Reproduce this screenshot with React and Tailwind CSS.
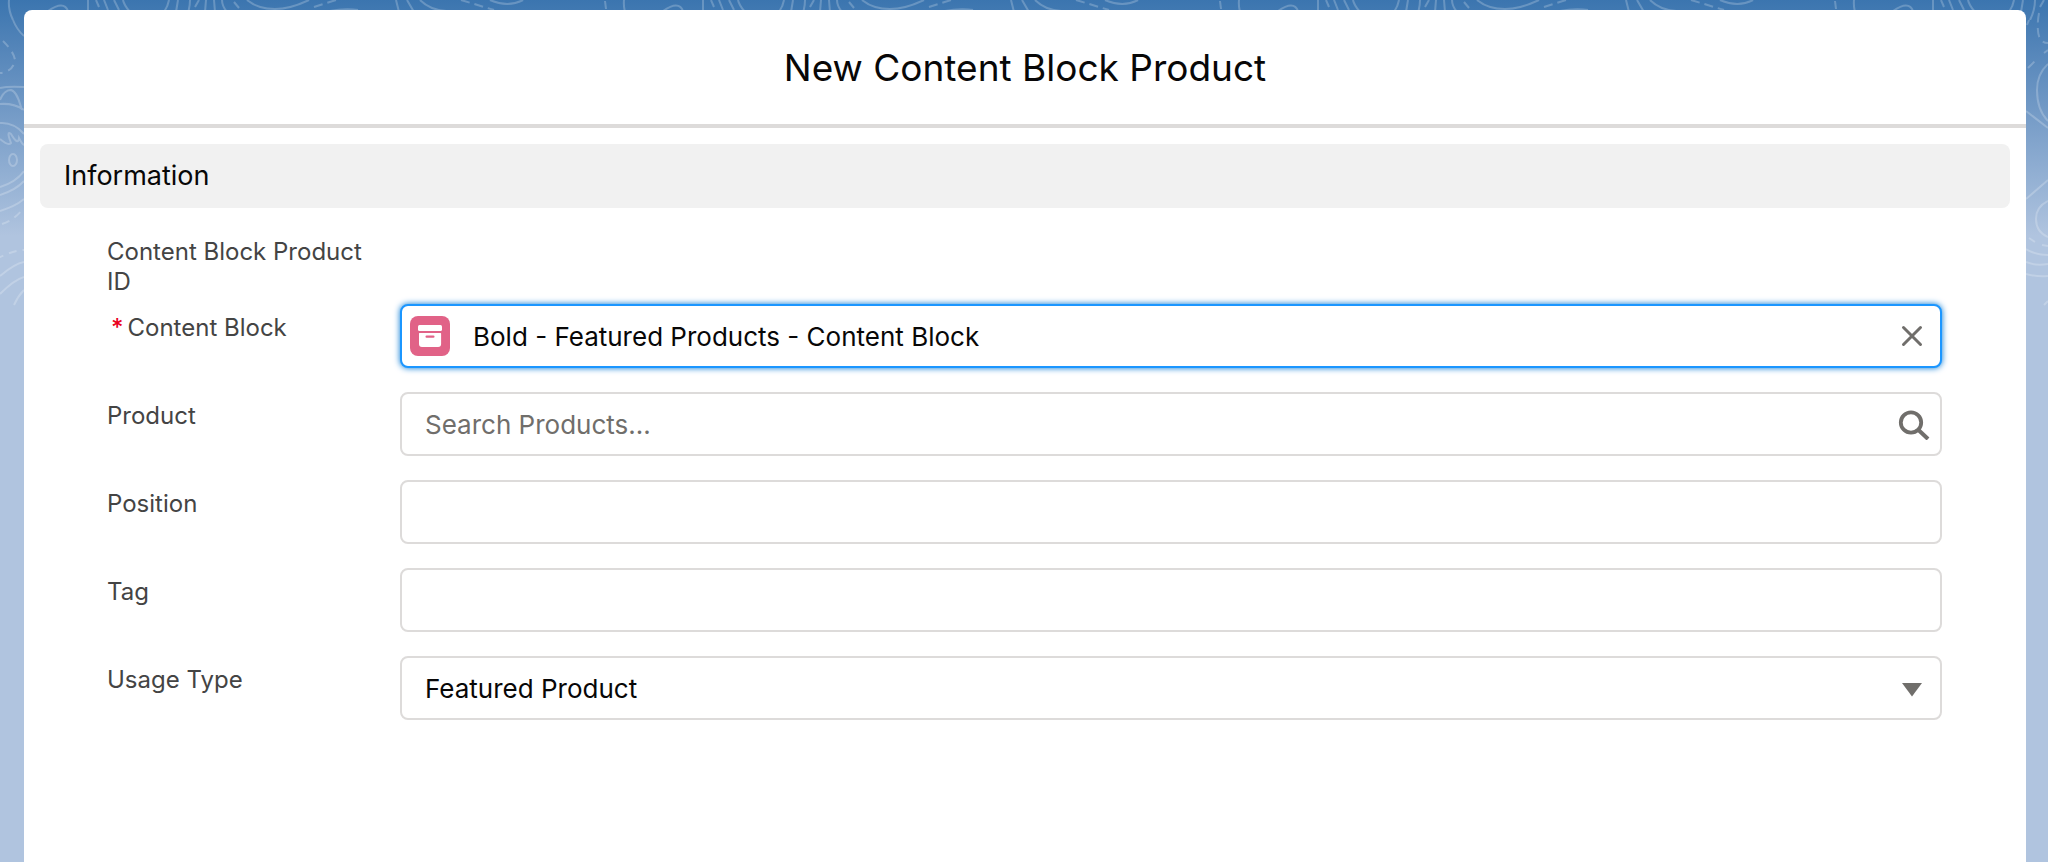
import { useState } from "react";

const usageTypes = ["--None--", "Featured Product", "Related Product"];

const labelStyles = "text-2xl leading-[30px] text-[#444444]";
const inputStyles =
  "block w-full h-16 rounded-lg border-2 border-[#dddbda] bg-white px-[23px] pt-px text-[26px] leading-8 text-[#080707] placeholder:text-[#706e6b] placeholder:opacity-100 outline-none";

function Backdrop() {
  return (
    <div className="absolute inset-0 -z-10" aria-hidden="true">
      <div className="h-[236px] bg-linear-to-b from-[#3b75af] to-[#b0c4df]" />

      {/* Contours along the top edge */}
      <svg className="absolute top-0 left-0 w-full h-5">
        <defs>
          <pattern
            id="contours"
            width="615"
            height="20"
            patternUnits="userSpaceOnUse"
          >
            <g fill="none" stroke="#fff" strokeOpacity="0.22" strokeWidth="2">
              <path d="M9 0Q8 10 13 20M48 11Q64 0 68 11M88 0V10M96 0L99 7M104 0L108 10M114 0L119 10M123 0Q124 5 130 12" />
              <path d="M169 0Q168 6 164 12M178 0L176 12M190 0Q190 10 185 20M199 0L195 7M206 0L205 12M214 0L215 12M222 0Q222 6 227 12M234 2L239 8" />
              <path d="M247 0Q258 9 275 9Q290 9 309 0M330 11Q345 8 358 10M396 0L399 12M407 0L414 12M420 0Q430 10 446 11" />
              <path d="M314 7L336 0M461 0L494 10" strokeDasharray="9 5" />
              <path d="M490 0Q508 8 523 0M605 1L606 9" />
            </g>
          </pattern>
        </defs>
        <rect width="100%" height="20" fill="url(#contours)" />
      </svg>

      {/* Contours down both sides */}
      <svg
        className="absolute top-0 left-0"
        width="24"
        height="310"
        fill="none"
        stroke="#fff"
        strokeOpacity="0.22"
        strokeWidth="2"
      >
        <path d="M13 20Q17 30 24 36M0 88Q8 86 24 87M0 100Q4 90 11 90C18 92 20 105 22 110M0 104Q14 103 24 110M0 123Q14 122 24 134" />
        <path d="M0 139Q8 146 11 143Q6 130 11 134Q18 146 19 138Q22 144 24 145" />
        <ellipse cx="13" cy="160" rx="4" ry="6" />
        <path d="M0 187Q16 182 24 171M0 195Q16 190 24 181M0 211Q16 206 24 199M0 276Q14 264 24 262M0 294Q14 280 24 277M14 305Q18 296 24 290" />
        <path
          d="M3 41Q14 52 15 60Q13 72 0 73M2 224Q14 220 22 210M-4 259Q14 250 24 250"
          strokeDasharray="8 6"
        />
      </svg>
      <svg
        className="absolute top-0 right-0"
        width="22"
        height="310"
        fill="none"
        stroke="#fff"
        strokeOpacity="0.22"
        strokeWidth="2"
      >
        <path d="M1 25L3 20M22 64Q11 74 11 90Q11 110 22 121M0 111L22 128M0 199L22 180M22 201Q10 207 10 219Q10 232 22 237" />
        <path d="M0 249Q9 255 22 255M0 262Q9 266 22 264M0 274Q11 277 22 276M18 305L22 301" />
        <path
          d="M13 13Q10 30 14 39Q17 43 22 43M2 68L11 59M18 53L22 50M3 238L9 242M16 245L22 246"
          strokeDasharray="9 6"
        />
      </svg>
    </div>
  );
}

function ContentBlockIcon() {
  return (
    <svg
      className="size-10 shrink-0"
      viewBox="0 0 40 40"
      fill="none"
      aria-hidden="true"
    >
      <rect width="40" height="40" rx="8" fill="#e16287" />
      <rect x="8" y="9" width="24" height="6" rx="1.5" fill="#fff" />
      <path
        d="M9.5 17h21a.6.6 0 0 1 .6.6V28a3 3 0 0 1-3 3H12a3 3 0 0 1-3-3V17.6a.6.6 0 0 1 .5-.6z"
        fill="#fff"
      />
      <rect x="15.5" y="19.5" width="9" height="2.3" rx="1.1" fill="#e16287" />
    </svg>
  );
}

function Field({ id, label, required, children }) {
  return (
    <div className="flex mb-6">
      <div className="w-[293px] shrink-0 pt-[9px]">
        {required && (
          <abbr
            className="px-1 text-2xl leading-[30px] font-medium text-[#ea001e] no-underline"
            title="required"
          >
            *
          </abbr>
        )}
        <label htmlFor={id} className={labelStyles}>
          {label}
        </label>
      </div>
      <div className="relative grow">{children}</div>
    </div>
  );
}

export default function App() {
  const [contentBlock, setContentBlock] = useState(
    "Bold - Featured Products - Content Block"
  );
  const [product, setProduct] = useState("");
  const [position, setPosition] = useState("");
  const [tag, setTag] = useState("");
  const [usageType, setUsageType] = useState("Featured Product");

  return (
    <div className="relative isolate flex min-h-screen bg-[#b0c4df] pt-[10px] pl-6 pr-[22px] font-['Inter',sans-serif]">
      <Backdrop />

      <main className="grow rounded-t-lg bg-white">
        <header className="flex h-[118px] items-center justify-center border-b-4 border-[#dddbda] pt-[2px]">
          <h1 className="text-[37px] leading-[50px] text-[#080707]">
            New Content Block Product
          </h1>
        </header>

        <form className="pt-4" onSubmit={(e) => e.preventDefault()}>
          <h2 className="mx-4 flex h-16 items-center rounded-lg bg-[#f1f1f1] px-6 text-[27px] leading-9 text-[#080707]">
            Information
          </h2>

          <div className="pt-[29px] pl-[83px] pr-[84px]">
            <p className={`w-[270px] mb-[7px] ${labelStyles}`}>
              Content Block Product ID
            </p>

            {/* Content Block */}
            <Field id="content-block" label="Content Block" required>
              <div className="flex h-16 items-center rounded-lg border-2 border-[#1b96ff] bg-white pl-2 pr-3 shadow-[0_0_6px_#0176d3]">
                <ContentBlockIcon />
                <input
                  id="content-block"
                  type="text"
                  className="grow px-[23px] pt-px text-[26px] leading-8 text-[#080707] outline-none"
                  value={contentBlock}
                  onChange={(e) => setContentBlock(e.target.value)}
                />
                <button
                  type="button"
                  aria-label="Clear selection"
                  className="p-1"
                  onClick={() => setContentBlock("")}
                >
                  <svg
                    className="size-6"
                    viewBox="0 0 24 24"
                    stroke="#706e6b"
                    strokeWidth="3"
                    strokeLinecap="round"
                  >
                    <path d="M3.5 3.5L20.5 20.5M20.5 3.5L3.5 20.5" />
                  </svg>
                </button>
              </div>
            </Field>

            {/* Product */}
            <Field id="product" label="Product">
              <input
                id="product"
                type="text"
                placeholder="Search Products..."
                className={inputStyles}
                value={product}
                onChange={(e) => setProduct(e.target.value)}
              />
              <svg
                className="absolute top-4 right-3 size-8 pointer-events-none"
                viewBox="0 0 32 32"
                fill="none"
                stroke="#706e6b"
                aria-hidden="true"
              >
                <circle cx="13" cy="14.5" r="10.2" strokeWidth="3.8" />
                <path d="M20.5 22L30 31" strokeWidth="4" />
              </svg>
            </Field>

            {/* Position */}
            <Field id="position" label="Position">
              <input
                id="position"
                type="text"
                className={inputStyles}
                value={position}
                onChange={(e) => setPosition(e.target.value)}
              />
            </Field>

            {/* Tag */}
            <Field id="tag" label="Tag">
              <input
                id="tag"
                type="text"
                className={inputStyles}
                value={tag}
                onChange={(e) => setTag(e.target.value)}
              />
            </Field>

            {/* Usage Type */}
            <Field id="usage-type" label="Usage Type">
              <select
                id="usage-type"
                className={`appearance-none ${inputStyles}`}
                value={usageType}
                onChange={(e) => setUsageType(e.target.value)}
              >
                {usageTypes.map((type) => (
                  <option key={type}>{type}</option>
                ))}
              </select>
              <svg
                className="absolute top-[27px] right-5 w-5 h-[14px] pointer-events-none"
                viewBox="0 0 20 14"
                fill="#706e6b"
                aria-hidden="true"
              >
                <path d="M0 0H20L10 13.5Z" />
              </svg>
            </Field>
          </div>
        </form>
      </main>
    </div>
  );
}
